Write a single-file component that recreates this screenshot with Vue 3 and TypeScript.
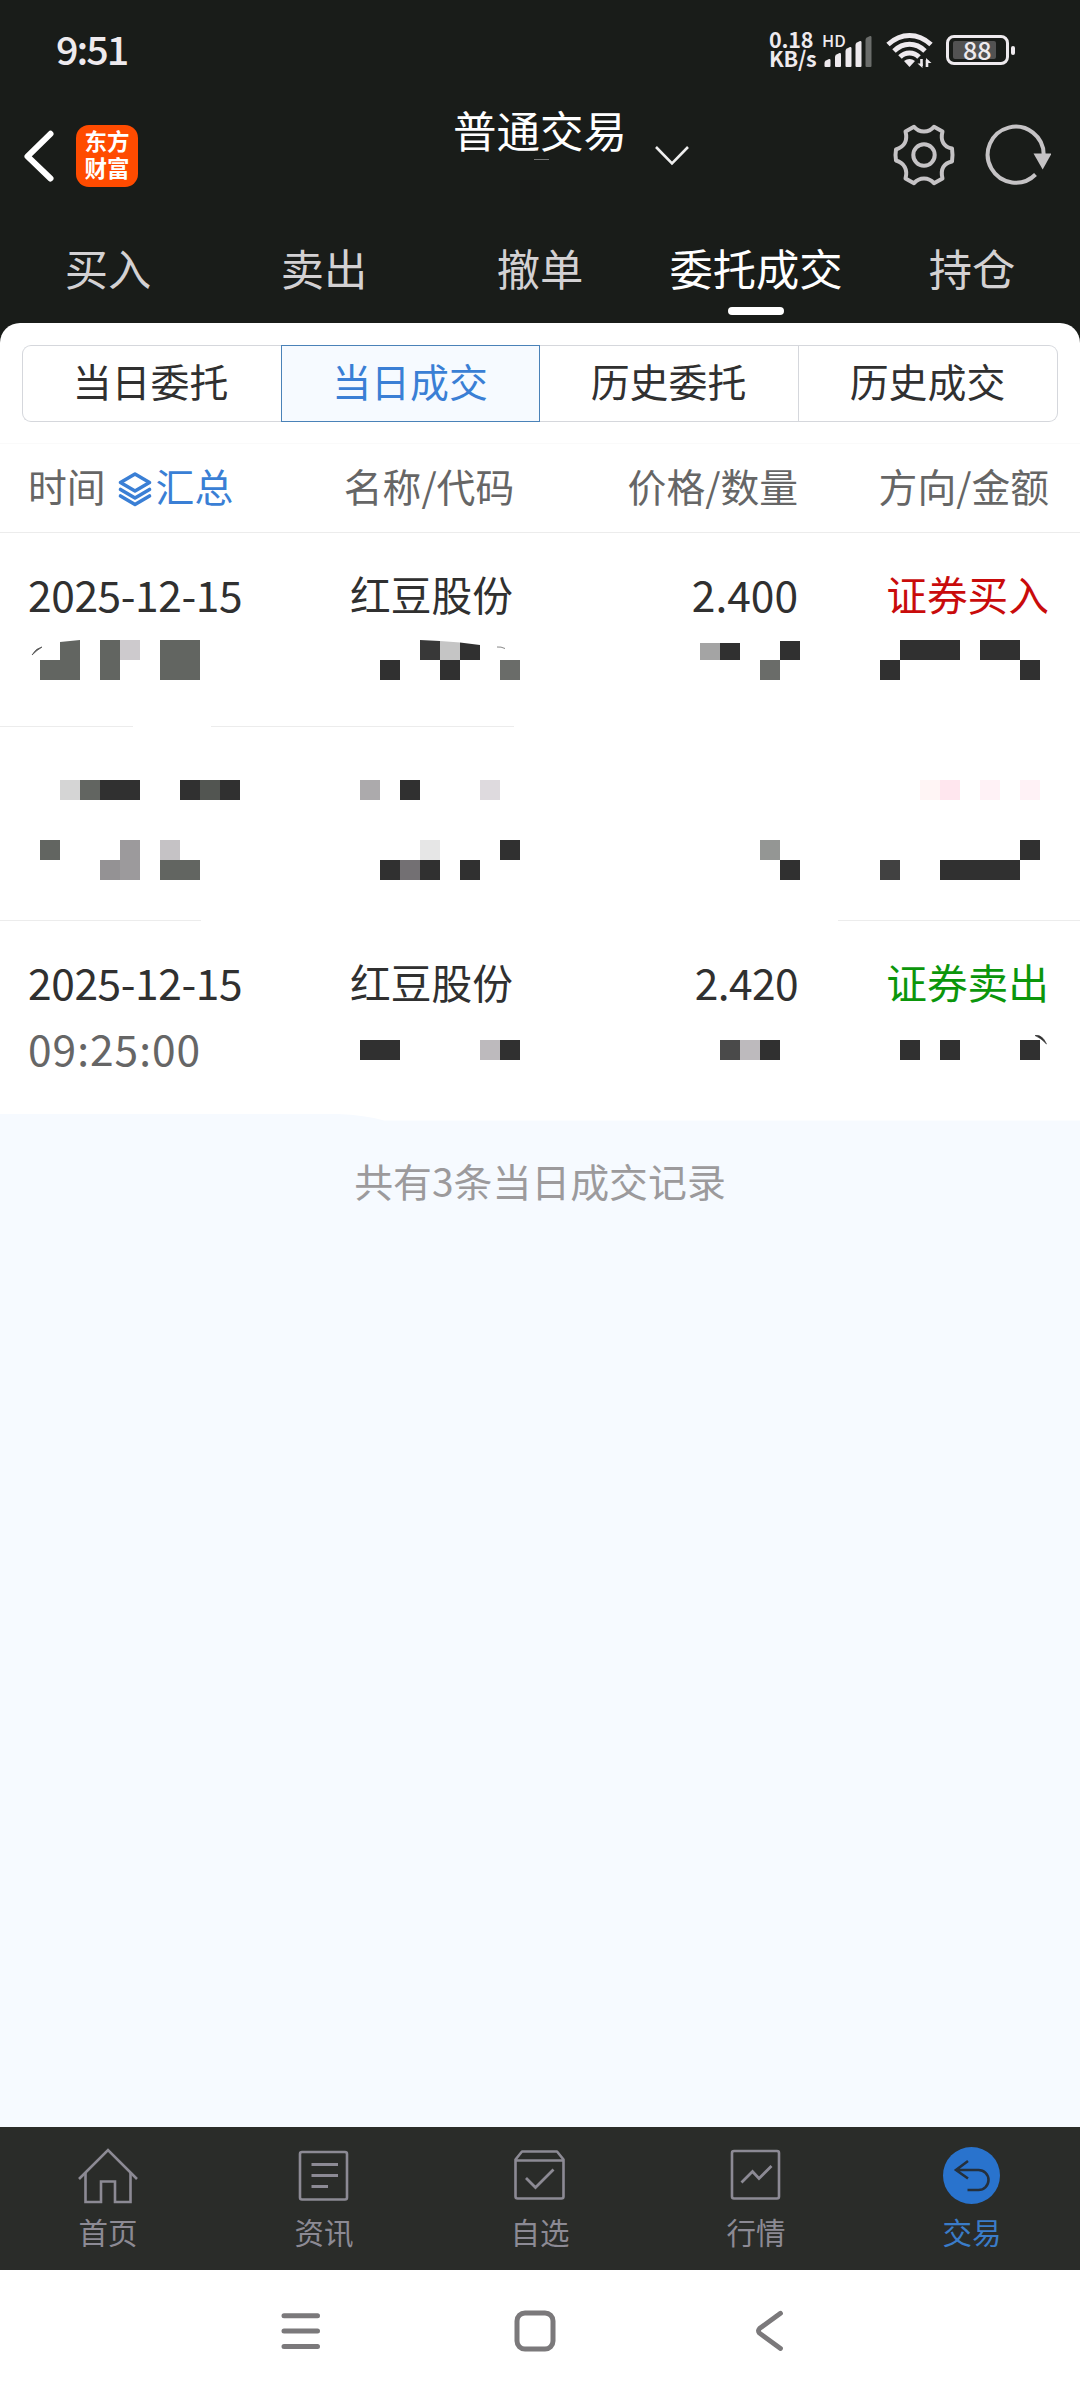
<script setup lang="ts">
interface Block { x: number; y: number; w: number; h: number; c: string }
interface Trade {
  date: string
  time: string
  name: string
  price: string
  side: string
  tone: 'buy' | 'sell' | ''
  lines: [number, number][]
  blocks: Block[]
}

const DARK = '#303030'
const GRAY = '#626561'
const b = (x: number, y: number, w = 20, h = 20, c = DARK): Block => ({ x, y, w, h, c })

const tabs = ['买入', '卖出', '撤单', '委托成交', '持仓']
const segments = ['当日委托', '当日成交', '历史委托', '历史成交']
const bars = [
  { x: 1, h: 8 }, { x: 11.5, h: 14 }, { x: 22, h: 20 }, { x: 32, h: 26 }, { x: 42, h: 31 },
]

// Redaction blocks use coordinates local to each 1080x194 row.
const trades: Trade[] = [
  {
    date: '2025-12-15', time: '', name: '红豆股份', price: '2.400', side: '证券买入', tone: 'buy',
    lines: [[0, 133], [211, 514]],
    blocks: [
      b(40, 127, 40, 20, GRAY), b(100, 107, 20, 40, GRAY), b(120, 107, 20, 20, '#cdcacd'), b(160, 107, 40, 40, GRAY),
      b(380, 127), b(440, 127), b(500, 127, 20, 20, '#6a6c69'),
      b(700, 110, 20, 17, '#a4a4a4'), b(720, 110, 20, 17), b(760, 127, 20, 20, '#6a6c69'), b(780, 108, 20, 19),
      b(880, 127), b(900, 107, 60), b(980, 107, 40), b(1020, 127),
    ],
  },
  {
    date: '', time: '', name: '', price: '', side: '', tone: '',
    lines: [[0, 201], [838, 1080]],
    blocks: [
      b(60, 53, 20, 20, '#d5d5d5'), b(80, 53, 20, 20, GRAY), b(100, 53, 40), b(180, 53), b(200, 53, 20, 20, '#525551'), b(220, 53),
      b(360, 53, 20, 20, '#acaaac'), b(400, 53), b(480, 53, 20, 20, '#dedade'),
      b(920, 53, 20, 20, '#fff5f5'), b(940, 53, 20, 20, '#ffe6ee'), b(980, 53, 20, 20, '#fff2f6'), b(1020, 53, 20, 20, '#fff2f6'),
      b(40, 113, 20, 20, GRAY), b(120, 113, 20, 40, '#9c9a9c'), b(160, 113, 20, 20, '#c5c2c5'),
      b(420, 113, 20, 20, '#e6e6e6'), b(500, 113), b(760, 113, 20, 20, '#949694'), b(1020, 113),
      b(100, 133, 20, 20, '#949294'), b(160, 133, 40, 20, GRAY),
      b(380, 133), b(400, 133, 20, 20, '#737073'), b(420, 133), b(460, 133), b(780, 133),
      b(880, 133, 20, 20, '#414141'), b(940, 133, 80),
    ],
  },
  {
    date: '2025-12-15', time: '09:25:00', name: '红豆股份', price: '2.420', side: '证券卖出', tone: 'sell',
    lines: [],
    blocks: [
      b(360, 119, 40), b(480, 119, 20, 20, '#bdbabd'), b(500, 119),
      b(720, 119, 20, 20, '#4a4a4a'), b(740, 119, 20, 20, '#bdbabd'), b(760, 119),
      b(900, 119), b(940, 119), b(1020, 119),
    ],
  },
]
</script>

<template>
  <div class="screen">
    <header class="top">
      <div class="status">
        <span class="clock">9:51</span>
        <div class="status-right">
          <div class="speed">0.18 KB/s</div>
          <div class="signal">
            <span class="hd">HD</span>
            <svg width="50" height="34" viewBox="0 0 50 34">
              <path v-for="(bar, i) in bars" :key="i" :fill="i === 4 ? '#6b6d6b' : '#eeeaee'"
                :d="`M${bar.x + 0.5} 33 q-1 0 -1 -1 V${33 - bar.h + 4} q0 -1.6 1.5 -2.4 l3 -1.5 q1.5 -.4 1.5 1.4 V32 q0 1 -1 1z`" />
            </svg>
          </div>
          <svg class="wifi" width="48" height="38" viewBox="0 0 48 38">
            <g fill="none" stroke="#eeeaee" stroke-width="5">
              <path d="M2 13.5Q12 4.500 23.500 4.500T45 13.500" />
              <path d="M8 20Q15 13.300 23.500 13.300T39 20" />
              <path d="M14 26Q18 22 23.500 22T33 26" />
            </g>
            <path d="M18 30q5.500-4 11 0l-5.500 6z" fill="#eeeaee" />
            <path d="M35.500 28v7M41 36v-7" stroke="#eeeaee" stroke-width="2.600" />
            <path d="M31.500 32.500h5v4.500zM40 27v5h5.500z" fill="#eeeaee" />
          </svg>
          <div class="battery"><span class="level"></span><span class="pct">88</span><span class="nub"></span></div>
        </div>
      </div>

      <div class="title-row">
        <svg class="back" width="36" height="56" viewBox="0 0 36 56"><path d="M30.500 5.800L7.500 28.300L30.500 50.500" fill="none" stroke="#fff" stroke-width="6" stroke-linecap="round" stroke-linejoin="round" /></svg>
        <div class="logo">东方财富</div>
        <h1 class="title">普通交易<i class="speck"></i><i class="patch"></i></h1>
        <svg class="down" width="36" height="22" viewBox="0 0 36 22"><path d="M2 2L18 18.500L34 2" fill="none" stroke="#eee" stroke-width="2.600" /></svg>
        <svg class="gear" width="64" height="64" viewBox="-32 -32 64 64">
          <g fill="none" stroke="#c5c3c5" stroke-width="4" stroke-linejoin="round">
            <path d="M-10-28.300Q-6-23.500 0-23.500T10-28.300L18.500-23.500C16-14 20-8 28-6.500Q29 0 28 6.500C20 8 16 14 18.500 23.500L10 28.300Q6 23.500 0 23.500T-10 28.300L-18.500 23.500C-16 14-20 8-28 5.500Q-29 0-28-5.500C-20-8-16-14-18.500-23.500Z" />
            <circle r="10.700" />
          </g>
        </svg>
        <svg class="refresh" width="68" height="64" viewBox="0 0 68 64">
          <path d="M60.700 31A28 28 0 1 0 52.500 50.500" fill="none" stroke="#c5c3c5" stroke-width="4" />
          <path d="M50.500 29.500h18l-8.800 16z" fill="#c5c3c5" />
        </svg>
      </div>

      <nav class="tabs">
        <div v-for="(t, i) in tabs" :key="t" class="tab" :class="{ on: i === 3 }"><span>{{ t }}</span></div>
      </nav>
    </header>

    <main class="sheet">
      <div class="segments">
        <div v-for="(s, i) in segments" :key="s" class="seg" :class="{ on: i === 1 }">{{ s }}</div>
      </div>

      <div class="cols head">
        <div class="c1">
          <span>时间</span>
          <svg width="34" height="36" viewBox="0 0 34 36">
            <g fill="none" stroke="#3a7fd5" stroke-width="3.600" stroke-linejoin="round" stroke-linecap="round">
              <path d="M17 3L31.500 11.500L17 20L2.500 11.500Z" />
              <path d="M2.500 18.500L17 27L31.500 18.500" />
              <path d="M2.500 25L17 33.500L31.500 25" />
            </g>
          </svg>
          <span class="sum">汇总</span>
        </div>
        <div class="c2">名称/代码</div>
        <div class="c3">价格/数量</div>
        <div class="c4">方向/金额</div>
      </div>

      <section v-for="(t, i) in trades" :key="i" class="trade">
        <div class="cols body">
          <div class="c1"><div class="date">{{ t.date }}</div><div class="time">{{ t.time }}</div></div>
          <div class="c2">{{ t.name }}</div>
          <div class="c3" :class="{ tight: i === 2 }">{{ t.price }}</div>
          <div class="c4" :class="t.tone">{{ t.side }}</div>
        </div>
        <svg class="mask" width="1080" height="200" viewBox="0 0 1080 200">
          <rect v-for="(l, k) in t.lines" :key="'l' + k" :x="l[0]" y="193" :width="l[1] - l[0]" height="1" fill="#ececec" />
          <rect v-for="(r, k) in t.blocks" :key="k" :x="r.x" :y="r.y" :width="r.w" :height="r.h" :fill="r.c" shape-rendering="crispEdges" />
          <template v-if="i === 0">
            <path d="M60 109L80 107V127H60Z" fill="#626561" />
            <path d="M32 122Q36 115 42 114Q37 117 32 122Z" fill="#555" stroke="#555" stroke-width=".8" />
            <path d="M420 107L440 108V127H420Z" fill="#383838" />
            <path d="M440 108L460 109.500V127H440Z" fill="#c5c5c5" />
            <path d="M460 109.500L480 112V127H460Z" fill="#303030" />
            <path d="M497 114Q501 113.500 505 115.500" fill="none" stroke="#888" stroke-width="1" />
          </template>
          <template v-if="i === 2">
            <path d="M1035 114.500Q1042 113 1046.500 123Q1041 117 1035 114.500Z" fill="#303030" stroke="#303030" stroke-width=".6" />
            <path d="M338 193Q365 194 384 199.500H1080V193Z" fill="#fff" />
          </template>
        </svg>
      </section>
    </main>

    <div class="rest">共有3条当日成交记录</div>

    <nav class="bottom">
      <div class="item">
        <svg width="64" height="60" viewBox="0 0 64 60"><g fill="none" stroke="#8c8a94" stroke-width="2.600"><path d="M3 34L32 5L61 34" /><path d="M9.500 28V57H25V36.500H39V57H54.500V28" /></g></svg>
        <span>首页</span>
      </div>
      <div class="item">
        <svg width="64" height="60" viewBox="0 0 64 60"><g fill="none" stroke="#8c8a94" stroke-width="2.600"><rect x="8" y="7" width="47" height="47.500" rx="2" /><path d="M19.500 19.500H46M19.500 30.500H46M19.500 41.500H36" stroke-width="2.800" /></g></svg>
        <span>资讯</span>
      </div>
      <div class="item">
        <svg width="64" height="60" viewBox="0 0 64 60"><g fill="none" stroke="#8c8a94" stroke-width="2.600" stroke-linejoin="round"><path d="M7.500 14.500L14 6.500H49L55.500 14.500V51.500Q55.500 53.500 53.500 53.500H9.500Q7.500 53.500 7.500 51.500ZM7.500 15.500H55.500" /><path d="M18 33L27.500 42.500L45.500 24.500" stroke-width="2.800" stroke-linejoin="miter" /></g></svg>
        <span>自选</span>
      </div>
      <div class="item">
        <svg width="64" height="60" viewBox="0 0 64 60"><g fill="none" stroke="#8c8a94" stroke-width="2.600"><rect x="8" y="6" width="47" height="47.500" rx="2" /><path d="M17.500 37.500L28.500 26.500L35 33.500L47.500 21" stroke-width="2.800" /></g></svg>
        <span>行情</span>
      </div>
      <div class="item on">
        <svg width="64" height="60" viewBox="0 0 64 60"><circle cx="31.500" cy="30.500" r="28.500" fill="#2973cd" /><path d="M28 16L16 25L28 33.500M16 25H38.500A10 10 0 0 1 38.500 45H27.500" fill="none" stroke="#25303c" stroke-width="2.600" /></svg>
        <span>交易</span>
      </div>
    </nav>

    <div class="sysnav">
      <svg width="44" height="44" viewBox="0 0 44 44"><path d="M5 6.700H38.500M5 22H38.500M5 37.500H38.500" stroke="#7b797b" stroke-width="5" stroke-linecap="round" /></svg>
      <svg width="44" height="44" viewBox="0 0 44 44"><rect x="4" y="4" width="36" height="36" rx="8" fill="none" stroke="#7b797b" stroke-width="5" /></svg>
      <svg width="44" height="44" viewBox="0 0 44 44"><path d="M32.500 4.300L11.500 19.500Q9.500 21.800 11.500 24.100L32.500 39.500" fill="none" stroke="#7b797b" stroke-width="4.800" stroke-linecap="round" stroke-linejoin="round" /></svg>
    </div>
  </div>
</template>

<style>
body { margin: 0; background: #f6faff; }
</style>

<style scoped>
.screen {
  width: 1080px; height: 2400px; display: flex; flex-direction: column; overflow: hidden;
  background: #f6faff; font-family: "Noto Sans CJK SC", sans-serif; color: #303030;
}
.screen * { box-sizing: border-box; }
svg { display: block; flex: none; }
.top { height: 343px; flex: none; background: #191c19; display: flex; flex-direction: column; }
.status { height: 100px; display: flex; justify-content: space-between; padding-left: 56px; padding-right: 64px; color: #eeeaee; }
.clock { font-size: 39.500px; font-weight: 500; line-height: 56px; margin-top: 20px; letter-spacing: -2px; }
.status-right { display: flex; align-items: flex-start; }
.speed { width: 54px; margin-top: 30px; font-size: 21.500px; font-weight: 700; line-height: 18.500px; letter-spacing: -.2px; margin-left: -1px; }
.signal { position: relative; width: 50px; margin: 34px 12px 0 1px; }
.hd { position: absolute; left: -2px; top: -1px; font-size: 16.500px; line-height: 14px; font-weight: 500; }
.wifi { margin-top: 31px; }
.battery { position: relative; margin: 35px 7px 0 12px; width: 63px; height: 30px; border: 3px solid #eeeaee; border-radius: 8px; }
.level { position: absolute; left: 4px; top: 3px; width: 43px; height: 18px; border-radius: 2px; background: #525252; }
.pct { position: absolute; left: 14px; top: -1px; font-size: 25px; line-height: 24px; font-weight: 500; }
.nub { position: absolute; right: -9px; top: 8px; width: 4px; height: 9px; border-radius: 2px; background: #eeeaee; }

.title-row { height: 120px; position: relative; display: flex; align-items: flex-start; padding-left: 20px; }
.back { margin-top: 28px; }
.logo {
  margin: 25px 0 0 20px; width: 62px; height: 62px; border-radius: 13px; background: #ff4b00; color: #fff;
  padding: 2px 8px 0; font-size: 22.500px; line-height: 27px; font-weight: 700; word-break: break-all; text-align: center;
}
.title { position: relative; margin: 2px 0 0 315px; width: 176px; font-size: 43.500px; line-height: 56px; font-weight: 400; color: #fff; white-space: nowrap; }
.speck { position: absolute; left: 81px; top: 57px; width: 15px; height: 1px; background: #777; }
.patch { position: absolute; left: 67px; top: 78px; width: 20px; height: 20px; background: #181a18; }
.down { margin: 45px 0 0 25px; }
.gear { margin: 23px 0 0 202px; }
.refresh { margin: 24px 0 0 27px; }

.tabs { display: flex; height: 123px; }
.tab { flex: 1; position: relative; display: flex; justify-content: center; font-size: 43.300px; line-height: 56px; padding-top: 19px; color: #d3d1d3; }
.tab.on { color: #fff; }
.tab.on::after { content: ""; position: absolute; left: 80px; top: 87px; width: 56px; height: 8px; border-radius: 4px; background: #fff; }

.sheet { position: relative; margin-top: -20px; height: 791px; flex: none; background: #fff; border-radius: 20px 20px 0 0; padding-top: 22px; }
.segments { display: grid; grid-template-columns: 259px 259px 259px 259px; margin: 0 22px; height: 77px; }
.seg {
  display: flex; align-items: center; justify-content: center; padding: 0 1px 7px 0;
  font-size: 38.900px; border: 1px solid #d5d7dc; border-left-width: 0;
}
.seg:first-child { border-left-width: 1px; border-radius: 9px 0 0 9px; border-right: 0; padding-right: 3px; }
.seg:last-child { border-radius: 0 9px 9px 0; }
.seg.on { color: #3a7fd5; background: #f6faff; border: 1px solid #4a82b8; }

.cols { display: grid; grid-template-columns: 301px 257px 240px 251px; }
.c2 { text-align: center; }
.c3, .c4 { text-align: right; }
.head { height: 90px; margin-top: 21px; border-top: 1px solid #fafafa; border-bottom: 1px solid #ececec; font-size: 38.800px; line-height: 82px; color: #666; }
.head .c1 { display: flex; align-items: center; padding-left: 28px; height: 82px; }
.head .c1 svg { margin: 8px 4px 0 12px; }
.head .c2 { padding-right: 1px; }
.sum { color: #3a7fd5; }
.trade { position: relative; height: 194px; }
.mask { position: absolute; left: 0; top: 0; }
.body { font-size: 40.700px; line-height: 56px; padding-top: 33px; }
.body .c1 { padding-left: 28px; }
.body .c2 { padding-left: 4px; }
.date, .time, .body .c3 { font-size: 42.500px; }
.date { height: 66px; letter-spacing: -.4px; }
.time { color: #666; letter-spacing: 1px; }
.body .c3.tight { letter-spacing: -.6px; }
.buy { color: #c90b0b; }
.sell { color: #0b960b; }

.rest { flex: 1; padding-top: 38px; text-align: center; font-size: 38.900px; line-height: 56px; color: #9c9a9c; }

.bottom { height: 143px; flex: none; background: #2a2c29; display: flex; }
.item { flex: 1; display: flex; flex-direction: column; align-items: center; padding-top: 18px; font-size: 29.500px; line-height: 40px; color: #8c8a94; }
.item span { margin-top: 6px; }
.item.on { color: #3a7cc8; }
.sysnav { height: 130px; flex: none; background: #fff; display: flex; justify-content: center; gap: 190.500px; padding: 39px 10px 0 0; }
</style>
